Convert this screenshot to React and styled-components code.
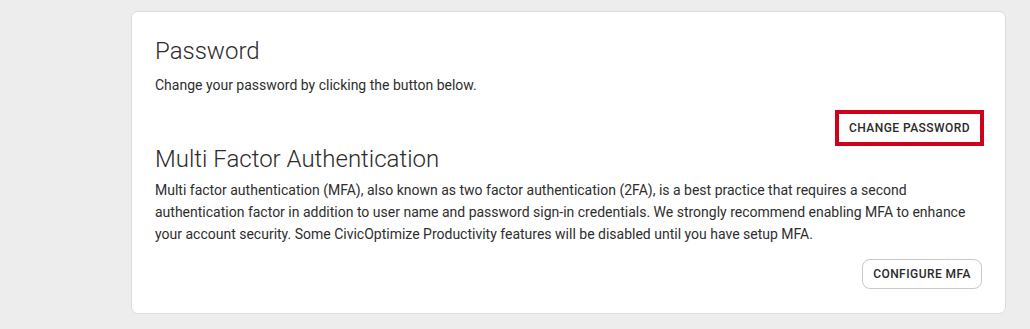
import React from 'react'
import styled, { createGlobalStyle } from 'styled-components'

const GlobalStyle = createGlobalStyle`
  html, body {
    margin: 0;
    padding: 0;
    background: #ededed;
    font-family: Roboto, "Liberation Sans", Arial, sans-serif;
  }
`

const Page = styled.div`
  padding: 11px 24px 14px 131px;
`

const Card = styled.section`
  background: #ffffff;
  border: 1px solid #dcdcdc;
  border-radius: 7px;
  padding: 23px 23px 24px;
`

const Title = styled.h2`
  margin: 0 0 ${({ $flush }) => ($flush ? 0 : 7)}px;
  font-size: 24px;
  line-height: 32px;
  font-weight: 300;
  color: #2b2b2b;
`

const Text = styled.p`
  margin: ${({ $tight }) => ($tight ? '4px 0 0' : '0')};
  font-size: 14px;
  line-height: 22px;
  color: #2e2e2e;
`

const Actions = styled.div`
  display: flex;
  justify-content: flex-end;
  margin-top: ${({ $gap }) => $gap}px;
  margin-right: ${({ $shift }) => $shift || 0}px;
`

const Button = styled.button`
  height: 30px;
  padding: 0 10px;
  font-family: inherit;
  font-size: 12px;
  font-weight: 500;
  letter-spacing: 0.45px;
  text-transform: uppercase;
  color: #2a2a2a;
  background: #fff;
  border: 1px solid ${({ $focused }) => ($focused ? '#d0021b' : '#c9c9c9')};
  border-radius: ${({ $focused }) => ($focused ? '0' : '8px')};
  box-shadow: ${({ $focused }) => ($focused ? '0 0 0 3px #d0021b' : 'none')};
  cursor: pointer;
`

const App = () => (
  <Page>
    <GlobalStyle />
    <Card>
      <Title>Password</Title>
      <Text>Change your password by clicking the button below.</Text>
      <Actions $gap={17} $shift={1}>
        <Button $focused>Change Password</Button>
      </Actions>
      <Title $flush>Multi Factor Authentication</Title>
      <Text $tight>
        Multi factor authentication (MFA), also known as two factor authentication (2FA), is a best practice that requires a second
        authentication factor in addition to user name and password sign-in credentials. We strongly recommend enabling MFA to enhance
        your account security. Some CivicOptimize Productivity features will be disabled until you have setup MFA.
      </Text>
      <Actions $gap={14}>
        <Button>Configure MFA</Button>
      </Actions>
    </Card>
  </Page>
)

export default App
